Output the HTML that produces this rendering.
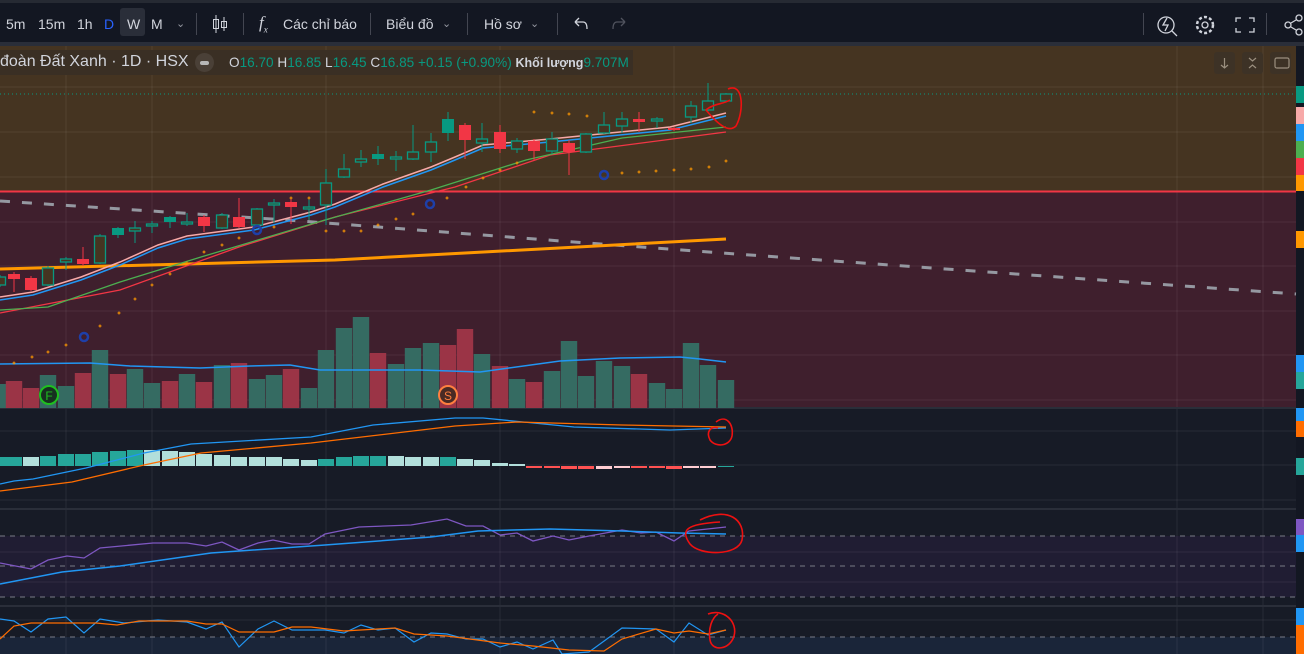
<!DOCTYPE html>
<html><head><meta charset="utf-8"><style>
*{margin:0;padding:0;box-sizing:border-box}
body{width:1304px;height:654px;overflow:hidden;background:#171b26;font-family:"Liberation Sans","Noto Sans CJK SC",sans-serif;position:relative}
#tb{position:absolute;left:0;top:0;width:1304px;height:46px;background:#131722;border-top:3px solid #262a33;border-bottom:4px solid #2a2e39}
.t{position:absolute;top:13px;font-size:14px;color:#d1d4dc;white-space:nowrap}
.sep{position:absolute;top:10px;width:1px;height:22px;background:#434651}
#leg{position:absolute;left:0;top:50px;width:633px;height:25px;background:#3a2f24;font-size:14px;color:#d1d4dc;white-space:nowrap}
#leg span{position:absolute;top:4px}
.g{color:#089981}
.btn{position:absolute;top:52px;width:21px;height:22px;background:#3d3226;border-radius:3px}
</style></head><body>
<svg id="ch" width="1304" height="654" style="position:absolute;left:0;top:0">
<rect x="0" y="46" width="1296" height="145" fill="#453421"/>
<rect x="0" y="192" width="1296" height="216" fill="#3f1f2d"/>
<rect x="0" y="408" width="1296" height="246" fill="#171b26"/>
<rect x="0" y="536" width="1296" height="61" fill="#201d33"/>
<rect x="0" y="637" width="1296" height="17" fill="#1a2539"/>
<rect x="1296" y="46" width="8" height="608" fill="#131722"/>
<g stroke="#ffffff" stroke-opacity="0.07" stroke-width="1">
<path d="M0 87H1296M0 132H1296M0 177H1296M0 222H1296M0 266H1296M0 311H1296M0 355H1296M0 400H1296M0 431H1296M0 465H1296M0 500H1296M0 552H1296M0 582H1296M0 620H1296"/>
<path d="M66 46V654M152 46V654M326 46V654M500 46V654M674 46V654M1177 46V654M1263 46V654"/>
</g>
<path d="M0 408H1296M0 509H1296M0 606H1296" stroke="#2a2e39" stroke-width="2"/>
<line x1="0" y1="191.5" x2="1296" y2="191.5" stroke="#f23645" stroke-width="2"/>
<line x1="0" y1="94" x2="1296" y2="94" stroke="#089981" stroke-width="1" stroke-dasharray="1 3"/>
<path d="M0 201L287 220L574 242L750 255L1296 294" stroke="#9598a1" stroke-width="3" fill="none" stroke-dasharray="10 12"/>
<g id="vol"></g>
<path d="M0 364L90 363L130 366L200 368L250 366L290 365L320 370L420 370L480 372L560 361L620 358L680 357L700 359L726 362" stroke="#2196f3" stroke-width="1.5" fill="none"/>
<path d="M0 269L335 260L726 239" stroke="#ff9800" stroke-width="3" fill="none"/>
<path d="M0 313L120 290L239 247L335 217L455 187L550 155L726 132" stroke="#f23645" stroke-width="1.3" fill="none"/>
<path d="M0 310L48 307L120 282L201 257L325 220L431 190L526 160L622 138L726 127" stroke="#4caf50" stroke-width="1.3" fill="none"/>
<path d="M0 297L33 292L81 277L120 262L158 245L187 236L254 227L311 212L335 204L383 184L431 167L455 157L483 145L550 139L670 127L726 113" stroke="#f7a9a8" stroke-width="1.5" fill="none"/>
<path d="M0 300L33 295L81 280L120 265L158 248L187 239L254 230L311 215L335 207L383 187L431 170L455 160L483 148L550 142L670 130L726 116" stroke="#2196f3" stroke-width="1.5" fill="none"/>
<g id="cand"></g>
<g id="sar" fill="#ff9800"></g>
<g fill="none" stroke="#1e3fa8" stroke-width="2.5"><circle cx="84" cy="337" r="4"/><circle cx="257" cy="230" r="4"/><circle cx="430" cy="204" r="4"/><circle cx="604" cy="175" r="4"/></g>
<circle cx="49" cy="395" r="9" fill="#173020" stroke="#1fbf1f" stroke-width="2"/><text x="49" y="400" font-size="12" fill="#1fbf1f" text-anchor="middle" font-family="Liberation Sans">F</text>
<circle cx="448" cy="395" r="9" fill="#4a2a24" stroke="#ff7f3f" stroke-width="2"/><text x="448" y="400" font-size="12" fill="#ff7f3f" text-anchor="middle" font-family="Liberation Sans">S</text>
<g id="hist"></g>
<path d="M0 484L14 481L33 479L86 468L144 453L191 444L311 437L373 425L455 418L483 418L574 427L670 430L726 428" stroke="#2196f3" stroke-width="1.3" fill="none"/>
<path d="M0 491L72 482L144 465L201 453L311 443L455 426L517 422L622 425L726 427" stroke="#ff6d00" stroke-width="1.3" fill="none"/>
<path d="M0 536H1296M0 566H1296M0 597H1296M0 637H1296" stroke="#787b86" stroke-width="1" stroke-dasharray="5 5"/>
<path d="M0 563L31 569L48 560L67 556L84 558L100 548L153 543L187 543L206 546L222 542L239 550L258 543L273 540L292 544L309 544L325 534L359 527L411 525L447 519L466 526L483 526L500 535L517 533L533 541L553 536L569 540L589 536L622 530L641 533L656 532L674 541L689 531L726 527" stroke="#7e57c2" stroke-width="1.3" fill="none"/>
<path d="M0 584L62 572L120 566L211 553L239 551L325 545L431 537L478 531L550 529L622 531L679 533L726 534" stroke="#2196f3" stroke-width="1.5" fill="none"/>
<path d="M0 619L14 621L31 632L48 619L66 617L84 633L100 619L124 623L158 620L187 622L206 629L222 622L239 647L258 629L274 621L292 630L325 630L344 633L361 625L378 630L395 628L414 642L431 633L447 634L466 639L483 639L500 647L517 642L533 649L553 640L562 654L589 652L622 628L656 629L674 642L689 623L708 635L726 630" stroke="#2196f3" stroke-width="1.2" fill="none"/>
<path d="M0 639L14 626L31 623L96 623L117 625L139 621L187 621L206 624L222 624L239 632L274 632L292 627L311 627L344 631L395 628L414 634L447 636L500 643L533 646L569 650L604 651L622 639L656 629L674 633L689 631L708 634L726 630" stroke="#ff6d00" stroke-width="1.2" fill="none"/>
<g fill="none" stroke="#ee1111" stroke-width="1.6">
<path d="M104 12C96 20 98 38 108 42C118 44 122 30 116 16C113 8 106 6 100 10"/>
<path d="M728 89C744 82 744 112 736 126C728 134 716 122 706 110C712 104 724 104 730 100"/>
<path d="M716 422C726 414 734 424 732 436C730 446 716 448 710 440C706 432 710 426 718 428"/>
<path d="M700 520C728 506 746 520 742 540C738 556 700 556 690 544C680 530 686 524 720 522"/>
<path d="M708 614C724 608 738 622 734 636C730 650 712 652 710 640C708 628 712 618 718 614"/>
</g>
<g>
<rect x="1296" y="86" width="8" height="17" fill="#089981"/><rect x="1296" y="107" width="8" height="17" fill="#f7a9a8"/><rect x="1296" y="124" width="8" height="17" fill="#2196f3"/><rect x="1296" y="141" width="8" height="17" fill="#4caf50"/><rect x="1296" y="158" width="8" height="17" fill="#f23645"/><rect x="1296" y="175" width="8" height="16" fill="#ff9800"/><rect x="1296" y="231" width="8" height="17" fill="#ff9800"/><rect x="1296" y="355" width="8" height="17" fill="#2196f3"/><rect x="1296" y="372" width="8" height="17" fill="#26a69a"/><rect x="1296" y="408" width="8" height="13" fill="#2196f3"/><rect x="1296" y="421" width="8" height="16" fill="#ff6d00"/><rect x="1296" y="458" width="8" height="17" fill="#26a69a"/><rect x="1296" y="519" width="8" height="16" fill="#7e57c2"/><rect x="1296" y="535" width="8" height="17" fill="#2196f3"/><rect x="1296" y="608" width="8" height="17" fill="#2196f3"/><rect x="1296" y="625" width="8" height="29" fill="#ff6d00"/>
</g>
</svg>
<div id="tb">
<span class="t" style="left:6px">5m</span><span class="t" style="left:38px">15m</span><span class="t" style="left:77px">1h</span>
<div style="position:absolute;left:120px;top:5px;width:25px;height:28px;background:#2a2e39;border-radius:3px"></div>
<span class="t" style="left:104px;color:#2962ff">D</span><span class="t" style="left:127px">W</span><span class="t" style="left:151px">M</span>
<span class="t" style="left:176px;font-size:11px;top:14px;color:#9598a1">&#8964;</span>
<div class="sep" style="left:196px"></div>
<svg style="position:absolute;left:212px;top:11px" width="16" height="20"><path d="M4 1V19M12 3V17" stroke="#d1d4dc"/><rect x="1.5" y="5.5" width="5" height="9" fill="none" stroke="#d1d4dc"/><rect x="9.5" y="7.5" width="5" height="6" fill="none" stroke="#d1d4dc"/></svg>
<div class="sep" style="left:243px"></div>
<span class="t" style="left:259px;font-style:italic;font-family:'Liberation Serif',serif;font-size:17px;top:10px">f<sub style="font-size:9px">x</sub></span>
<span class="t" style="left:283px">Các chỉ báo</span>
<div class="sep" style="left:370px"></div>
<span class="t" style="left:386px">Biểu đồ</span><span class="t" style="left:442px;font-size:11px;top:14px;color:#9598a1">&#8964;</span>
<div class="sep" style="left:467px"></div>
<span class="t" style="left:484px">Hồ sơ</span><span class="t" style="left:530px;font-size:11px;top:14px;color:#9598a1">&#8964;</span>
<div class="sep" style="left:557px"></div>
<svg style="position:absolute;left:571px;top:12px" width="60" height="18"><path d="M4 7H12C15 7 16 10 16 14M4 7L8 3M4 7L8 11" stroke="#d1d4dc" stroke-width="1.3" fill="none"/><path d="M54 7H46C43 7 42 10 42 14M54 7L50 3M54 7L50 11" stroke="#50535e" stroke-width="1.3" fill="none"/></svg>
<div class="sep" style="left:1143px"></div>
<svg style="position:absolute;left:1155px;top:9px" width="150" height="26"><circle cx="11" cy="13" r="8" fill="none" stroke="#d1d4dc" stroke-width="1.3"/><path d="M17 19L22 24M12 6L8 13H13L10 19" stroke="#d1d4dc" stroke-width="1.3" fill="none"/>
<circle cx="50" cy="13" r="3" fill="none" stroke="#d1d4dc" stroke-width="1.3"/><circle cx="50" cy="13" r="8" fill="none" stroke="#d1d4dc" stroke-width="2.5" stroke-dasharray="3 2.2"/>
<path d="M81 10V6H86M94 6H99V10M99 16V20H94M86 20H81V16" stroke="#d1d4dc" stroke-width="1.3" fill="none"/>
<circle cx="133" cy="13" r="3" fill="none" stroke="#d1d4dc" stroke-width="1.3"/><circle cx="144" cy="6" r="3" fill="none" stroke="#d1d4dc" stroke-width="1.3"/><circle cx="144" cy="20" r="3" fill="none" stroke="#d1d4dc" stroke-width="1.3"/><path d="M136 11L141 8M136 15L141 18" stroke="#d1d4dc" stroke-width="1.3"/></svg>
<div class="sep" style="left:1266px"></div>
</div>
<div id="leg">
<span style="left:0;font-size:16px;top:3px">đoàn Đất Xanh · 1D · HSX</span>
<span style="left:195px;top:3px;width:19px;height:19px;border-radius:50%;background:#4a4037"></span><span style="left:200px;top:11px;width:9px;height:4px;border-radius:2px;background:#b8b8b8"></span>
<span style="left:229px;font-size:13.6px;top:5px">O<b class="g" style="font-weight:normal">16.70</b> H<b class="g" style="font-weight:normal">16.85</b> L<b class="g" style="font-weight:normal">16.45</b> C<b class="g" style="font-weight:normal">16.85</b> <b class="g" style="font-weight:normal">+0.15 (+0.90%)</b> <b style="font-size:12.5px">Khối lượng</b><b class="g" style="font-weight:normal">9.707M</b></span>
</div>
<div class="btn" style="left:1214px"></div><div class="btn" style="left:1242px"></div><div class="btn" style="left:1270px"></div>
<svg style="position:absolute;left:1214px;top:52px" width="80" height="22"><path d="M10.5 6V16M7 13L10.5 16L14 13M35 6L38.5 9L42 6M35 16L38.5 13L42 16M61 8C61 6 62 6 63 6H73C74 6 75 6 75 8M61 14C61 16 62 16 63 16H73C74 16 75 16 75 14M61 8V14M75 8V14" stroke="#9b8f7f" stroke-width="1.2" fill="none"/></svg>
<script>
var C=[[0,'G',277,285,275,287],[14,'R',274,279,272,292],[31,'R',278,290,276,291],[48,'G',268,285,266,286],[66,'G',259,262,257,270],[83,'R',259,264,247,266],[100,'G',236,263,234,264],[118,'F',228,235,227,238],[135,'G',228,231,221,243],[152,'G',224,226,221,233],[170,'F',217,222,216,228],[187,'G',222,224,213,226],[204,'R',217,226,215,232],[222,'G',215,228,213,229],[239,'R',217,227,198,228],[257,'G',209,225,208,226],[274,'G',203,205,199,223],[291,'R',202,207,197,224],[309,'G',207,209,197,220],[326,'G',183,205,169,225],[344,'G',169,177,154,178],[361,'G',159,162,150,167],[378,'F',154,159,146,165],[396,'G',157,159,151,171],[413,'G',152,159,125,160],[431,'G',142,152,133,162],[448,'F',119,133,112,141],[465,'R',125,140,123,159],[482,'G',139,143,123,152],[500,'R',132,149,125,153],[517,'G',141,149,138,153],[534,'R',141,151,139,161],[552,'G',139,151,132,154],[569,'R',143,152,140,175],[586,'G',134,152,133,153],[604,'G',125,133,112,134],[622,'G',119,126,112,133],[639,'R',119,122,112,132],[657,'G',119,121,117,128],[674,'R',128,130,127,131],[691,'G',106,117,101,123],[708,'G',101,110,83,113],[726,'G',94,101,93,102]];
var s='';C.forEach(function(c){var x=c[0],col=c[1]=='R'?'#f23645':'#089981';s+='<line x1="'+x+'" y1="'+c[4]+'" x2="'+x+'" y2="'+c[5]+'" stroke="'+col+'" stroke-width="1"/>';
if(c[1]=='G')s+='<rect x="'+(x-5.5)+'" y="'+c[2]+'" width="11" height="'+Math.max(1,c[3]-c[2])+'" fill="#453421" stroke="'+col+'" stroke-width="1.3"/>';
else s+='<rect x="'+(x-6)+'" y="'+c[2]+'" width="12" height="'+Math.max(1.5,c[3]-c[2])+'" fill="'+col+'"/>';});
document.getElementById('cand').innerHTML=s;
var V=[[384,'G'],[381,'R'],[388,'R'],[375,'G'],[386,'G'],[373,'R'],[350,'G'],[374,'R'],[369,'G'],[383,'G'],[381,'R'],[374,'G'],[382,'R'],[365,'G'],[363,'R'],[379,'G'],[375,'G'],[369,'R'],[388,'G'],[350,'G'],[328,'G'],[317,'G'],[353,'R'],[364,'G'],[348,'G'],[343,'G'],[345,'R'],[329,'R'],[354,'G'],[366,'R'],[379,'G'],[382,'R'],[371,'G'],[341,'G'],[376,'G'],[361,'G'],[366,'G'],[374,'R'],[383,'G'],[389,'G'],[343,'G'],[365,'G'],[380,'G']];
s='';V.forEach(function(v,i){var x=C[i][0];s+='<rect x="'+(x-8.2)+'" y="'+v[0]+'" width="16.4" height="'+(408-v[0])+'" fill="'+(v[1]=='R'?'#9b3446':'#356b62')+'"/>';});
document.getElementById('vol').innerHTML=s;
var H=[[457,'t'],[457,'t'],[457,'l'],[456,'t'],[454,'t'],[454,'t'],[452,'t'],[451,'t'],[450,'t'],[450,'l'],[451,'l'],[452,'l'],[454,'l'],[455,'l'],[457,'l'],[457,'l'],[457,'l'],[459,'l'],[460,'l'],[459,'t'],[457,'t'],[456,'t'],[456,'t'],[456,'l'],[457,'l'],[457,'l'],[457,'t'],[459,'l'],[460,'l'],[463,'l'],[464,'l'],[468,'r'],[468,'r'],[469,'r'],[469,'r'],[469,'p'],[468,'p'],[468,'r'],[468,'r'],[469,'r'],[468,'p'],[468,'p'],[467,'t']];
var cl={t:'#26a69a',l:'#b2dfdb',r:'#ff5252',p:'#ffcdd2'};s='';
H.forEach(function(h,i){var x=C[i][0],y=h[0];var top=Math.min(y,466),ht=Math.abs(y-466)||1;s+='<rect x="'+(x-8)+'" y="'+top+'" width="16" height="'+ht+'" fill="'+cl[h[1]]+'"/>';});
document.getElementById('hist').innerHTML=s;
var S=[[14,363],[32,357],[48,352],[66,345],[100,326],[119,313],[135,299],[152,285],[170,274],[187,263],[204,252],[222,245],[239,238],[274,227],[291,198],[309,198],[326,231],[344,231],[361,231],[378,225],[396,219],[413,214],[447,198],[466,187],[483,178],[500,170],[517,163],[534,112],[552,113],[569,114],[587,116],[622,173],[639,172],[656,171],[674,170],[691,169],[709,167],[726,161]];
s='';S.forEach(function(p){s+='<path d="M'+(p[0]-1.5)+' '+p[1]+'h3M'+p[0]+' '+(p[1]-1.5)+'v3" stroke="#ff9800" stroke-width="1"/>';});
document.getElementById('sar').innerHTML=s;
</script>
</body></html>
